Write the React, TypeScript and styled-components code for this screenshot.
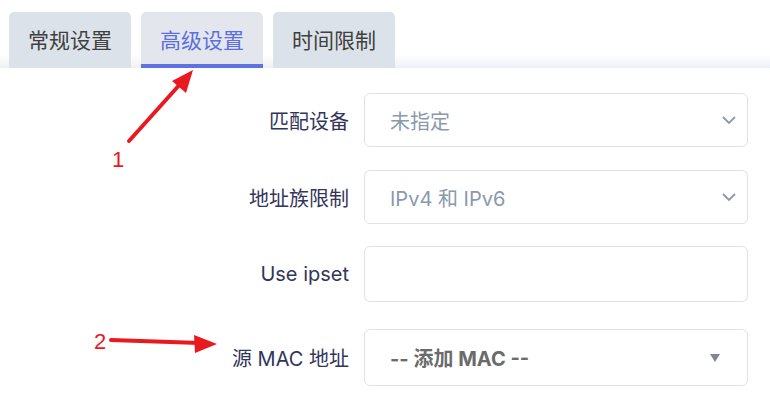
import * as React from "react";
import styled, { createGlobalStyle } from "styled-components";

const GlobalStyle = createGlobalStyle`
  html, body {
    margin: 0;
    padding: 0;
    background: #ffffff;
  }
  body {
    font-family: "Inter", "Noto Sans CJK SC", sans-serif;
  }
`;

type Field = {
  label: string;
  kind: "select" | "input" | "dropdown";
  value?: string;
  height: number;
  gap: number;
};

const fields: Field[] = [
  { label: "匹配设备", kind: "select", value: "未指定", height: 54, gap: 25 },
  { label: "地址族限制", kind: "select", value: "IPv4 和 IPv6", height: 54, gap: 23 },
  { label: "Use ipset", kind: "input", height: 56, gap: 22 },
  { label: "源 MAC 地址", kind: "dropdown", value: "-- 添加 MAC --", height: 57, gap: 27 },
];

const tabs = ["常规设置", "高级设置", "时间限制"];

function App(): JSX.Element {
  return (
    <Page>
      <GlobalStyle />
      <TabBar>
        {tabs.map((t, i) => (
          <Tab key={t} $active={i === 1}>
            {t}
          </Tab>
        ))}
      </TabBar>
      <Form>
        {fields.map((f) => (
          <Row key={f.label} $gap={f.gap}>
            <Label>{f.label}</Label>
            <Control $height={f.height}>
              {f.kind === "select" && (
                <>
                  <SelectText>{f.value}</SelectText>
                  <svg width="16" height="10" viewBox="0 0 16 10">
                    <path d="M2 2 L8 8 L14 2" fill="none" stroke="#8a99ad" strokeWidth="1.8" />
                  </svg>
                </>
              )}
              {f.kind === "dropdown" && (
                <>
                  <DropText>{f.value}</DropText>
                  <Caret>
                    <svg width="10" height="8" viewBox="0 0 10 8">
                      <path d="M0 0 H10 L5 8 Z" fill="#7b8799" />
                    </svg>
                  </Caret>
                </>
              )}
            </Control>
          </Row>
        ))}
      </Form>
      <Annotations width="770" height="394" viewBox="0 0 770 394">
        <line x1="129" y1="141" x2="182" y2="82" stroke="#e8191f" strokeWidth="4" strokeLinecap="round" />
        <path d="M193 70 L172 81 L186 93 Z" fill="#e8191f" />
        <text x="112" y="167" fill="#e8191f" fontSize="22" fontFamily="Liberation Sans, sans-serif">
          1
        </text>
        <line x1="111" y1="340" x2="200" y2="343" stroke="#e8191f" strokeWidth="4" strokeLinecap="round" />
        <path d="M217 344 L194 335 L195 353 Z" fill="#e8191f" />
        <text x="94" y="349" fill="#e8191f" fontSize="22" fontFamily="Liberation Sans, sans-serif">
          2
        </text>
      </Annotations>
    </Page>
  );
}

const Page = styled.div`
  position: relative;
  width: 770px;
  height: 394px;
  overflow: hidden;
  background: #ffffff;
`;

const TabBar = styled.div`
  display: flex;
  gap: 10px;
  padding: 12px 0 0 9px;
  height: 56px;
  background: linear-gradient(to bottom, #ffffff 0%, #ffffff 80%, #eef1f4 100%);
`;

const Tab = styled.div<{ $active: boolean }>`
  box-sizing: border-box;
  width: 122px;
  height: 56px;
  display: flex;
  align-items: center;
  justify-content: center;
  padding-top: 2px;
  border-radius: 5px 5px 0 0;
  background: ${(p) => (p.$active ? "#e3e7ed" : "#dce2e9")};
  color: ${(p) => (p.$active ? "#5b6fe0" : "#404040")};
  font-size: 21px;
  border-bottom: 4px solid ${(p) => (p.$active ? "#5e72e0" : "transparent")};
`;

const Form = styled.div`
  display: flex;
  flex-direction: column;
`;

const Row = styled.div<{ $gap: number }>`
  display: grid;
  grid-template-columns: 349px 384px;
  column-gap: 15px;
  align-items: center;
  margin-top: ${(p) => p.$gap}px;
`;

const Label = styled.div`
  text-align: right;
  font-size: 20px;
  color: #33355a;
`;

const Control = styled.div<{ $height: number }>`
  box-sizing: border-box;
  height: ${(p) => p.$height}px;
  border: 1px solid #dfe2e8;
  border-radius: 6px;
  display: flex;
  align-items: center;
  justify-content: space-between;
  padding: 0 10px 0 25px;
  background: #ffffff;
`;

const SelectText = styled.span`
  font-size: 20px;
  color: #8a99ad;
`;

const DropText = styled.span`
  font-size: 20px;
  font-weight: 700;
  color: #6b6b6b;
`;

const Caret = styled.span`
  display: flex;
  margin-right: 17px;
`;

const Annotations = styled.svg`
  position: absolute;
  left: 0;
  top: 0;
  pointer-events: none;
`;

export default App;
